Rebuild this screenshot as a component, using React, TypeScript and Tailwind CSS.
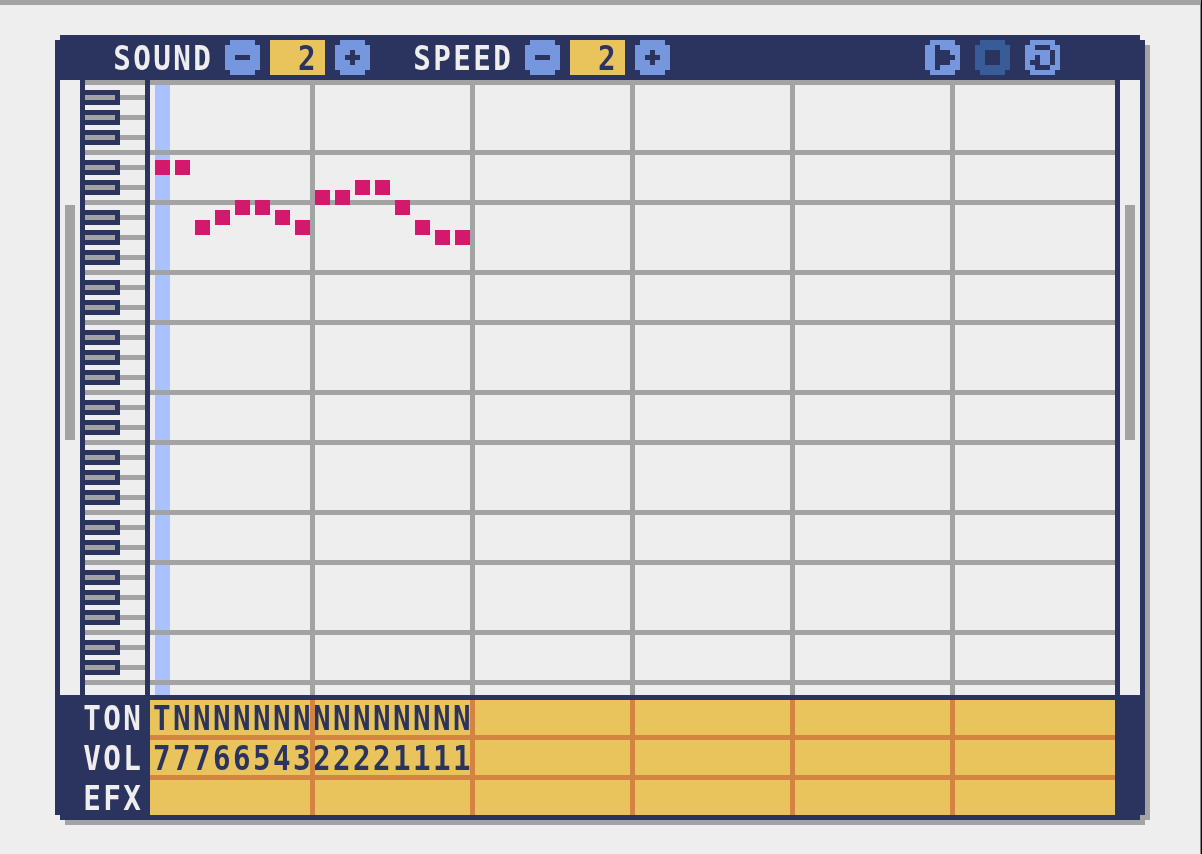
import type { ReactNode } from "react";

type Shape = [x: number, y: number, w: number, h: number];

const ICONS: Record<string, Shape[]> = {
  minus: [[2, 3, 3, 1]],
  plus: [[2, 3, 3, 1], [3, 2, 1, 3]],
  play: [[2, 1, 1, 5], [3, 2, 2, 3], [5, 3, 1, 1]],
  stop: [[2, 2, 3, 3]],
  loop: [[2, 1, 3, 1], [5, 2, 1, 3], [2, 5, 3, 1], [2, 3, 1, 2], [1, 4, 1, 1]],
};

const NOTES = [8, 8, 14, 13, 12, 12, 13, 14, 11, 11, 10, 10, 12, 14, 15, 15];
const OCTAVES = [0, 1, 2, 3, 4];

function PixelText({ children, className = "" }: { children: ReactNode; className?: string }) {
  return (
    <span
      className={`block origin-left scale-x-[0.86] whitespace-nowrap pt-px font-['DejaVu_Sans_Mono',monospace] text-[34px] font-bold leading-[35px] tracking-[2.79px] ${className}`}
    >
      {children}
    </span>
  );
}

function PixelButton({ icon, disabled = false }: { icon: string; disabled?: boolean }) {
  return (
    <button type="button" aria-label={icon} disabled={disabled} className="size-[35px] shrink-0">
      <svg viewBox="0 0 7 7" className="block size-[35px]" shapeRendering="crispEdges">
        <path d="M1 0h5v1h1v5h-1v1h-5v-1h-1v-5h1z" fill={disabled ? "#395c98" : "#7696de"} />
        {ICONS[icon].map(([x, y, w, h], i) => (
          <rect key={i} x={x} y={y} width={w} height={h} fill="#2b335f" />
        ))}
      </svg>
    </button>
  );
}

function Stepper({ label, value }: { label: string; value: number }) {
  return (
    <div className="flex w-[300px] items-center">
      <div className="h-[35px] w-[110px]">
        <PixelText className="-indent-[2px] text-[#eeeeee]">{label}</PixelText>
      </div>
      <PixelButton icon="minus" />
      <div className="mx-2.5 h-[35px] w-[55px] bg-[#e9c35b] pl-[28px]">
        <PixelText className="text-[#2b335f]">{value}</PixelText>
      </div>
      <PixelButton icon="plus" />
    </div>
  );
}

function Scrollbar() {
  return (
    <div className="w-5 bg-[#eeeeee] px-[5px] pt-[125px]">
      <div className="h-[235px] w-2.5 bg-[#a3a3a3]" />
    </div>
  );
}

function BlackKey() {
  return (
    <div className="flex h-[15px] items-center">
      <div className="h-[15px] w-[35px] border-y-5 border-r-5 border-[#2b335f] bg-[#a3a3a3]" />
      <div className="h-[5px] flex-1 bg-[#a3a3a3]" />
    </div>
  );
}

function Keyboard() {
  return (
    <div className="w-[60px] bg-[#eeeeee]">
      {OCTAVES.map((o) => (
        <div key={o}>
          <div className="flex h-[70px] flex-col gap-[5px] border-t-5 border-[#a3a3a3] pt-[5px]">
            <BlackKey />
            <BlackKey />
            <BlackKey />
          </div>
          <div className="flex h-[50px] flex-col gap-[5px] border-t-5 border-[#a3a3a3] pt-[5px]">
            <BlackKey />
            <BlackKey />
          </div>
        </div>
      ))}
      <div className="h-[15px] border-t-5 border-[#a3a3a3]" />
    </div>
  );
}

function BarLines({ className }: { className: string }) {
  return (
    <div className="pointer-events-none absolute inset-0 flex">
      <div className="w-40" />
      {[1, 2, 3, 4, 5].map((n) => (
        <div key={n} className={`w-40 border-l-5 ${className}`} />
      ))}
    </div>
  );
}

function PianoRoll() {
  return (
    <div className="relative w-[965px] bg-[#eeeeee]">
      <div className="absolute inset-y-0 left-[5px] w-[15px] bg-[#a9c1ff]" />
      <div className="relative">
        {OCTAVES.map((o) => (
          <div key={o}>
            <div className="h-[70px] border-t-5 border-[#a3a3a3]" />
            <div className="h-[50px] border-t-5 border-[#a3a3a3]" />
          </div>
        ))}
        <div className="h-[15px] border-t-5 border-[#a3a3a3]" />
      </div>
      <BarLines className="border-[#a3a3a3]" />
      {NOTES.map((row, i) => (
        <div
          key={i}
          className="absolute size-[15px] bg-[#d4186c]"
          style={{ left: 5 + i * 20, top: row * 10 }}
        />
      ))}
    </div>
  );
}

function Track({ label }: { label: string }) {
  return (
    <div className="h-10">
      <PixelText className="-indent-[2px] text-[#eeeeee]">{label}</PixelText>
    </div>
  );
}

function Lane({ value, last = false }: { value: string; last?: boolean }) {
  return (
    <div className={`pl-[3px] ${last ? "h-[35px]" : "h-10 border-b-5 border-[#d38441]"}`}>
      <PixelText className="text-[#2b335f]">{value}</PixelText>
    </div>
  );
}

export default function App() {
  return (
    <div className="flex h-[854px] w-[1202px] overflow-hidden bg-[#08090c]">
      <main className="w-[1201px] border-r border-t-5 border-r-[#868686] border-t-[#a3a3a3] bg-[#eeeeee] pl-[55px] pt-[30px]">
        <div className="w-[1090px] drop-shadow-[5px_5px_0_#a3a3a3]">
          <div className="h-[785px] bg-[#2b335f] [clip-path:polygon(5px_0,1085px_0,1085px_5px,1090px_5px,1090px_780px,1085px_780px,1085px_785px,5px_785px,5px_780px,0_780px,0_5px,5px_5px)]">
            <header className="flex h-[45px] items-center pl-[60px] pr-[85px]">
              <Stepper label="SOUND" value={2} />
              <Stepper label="SPEED" value={2} />
              <div className="ml-auto flex gap-[15px]">
                <PixelButton icon="play" />
                <PixelButton icon="stop" disabled />
                <PixelButton icon="loop" />
              </div>
            </header>
            <section className="flex h-[615px] gap-[5px] px-[5px]">
              <Scrollbar />
              <Keyboard />
              <PianoRoll />
              <Scrollbar />
            </section>
            <section className="flex pt-[5px]">
              <div className="h-[115px] w-[95px] pl-[30px]">
                <Track label="TON" />
                <Track label="VOL" />
                <Track label="EFX" />
              </div>
              <div className="relative h-[115px] w-[965px] bg-[#e9c35b]">
                <Lane value="TNNNNNNNNNNNNNNN" />
                <Lane value="7776654322221111" />
                <Lane value="" last />
                <BarLines className="border-[#d38441]" />
              </div>
            </section>
          </div>
        </div>
      </main>
    </div>
  );
}
